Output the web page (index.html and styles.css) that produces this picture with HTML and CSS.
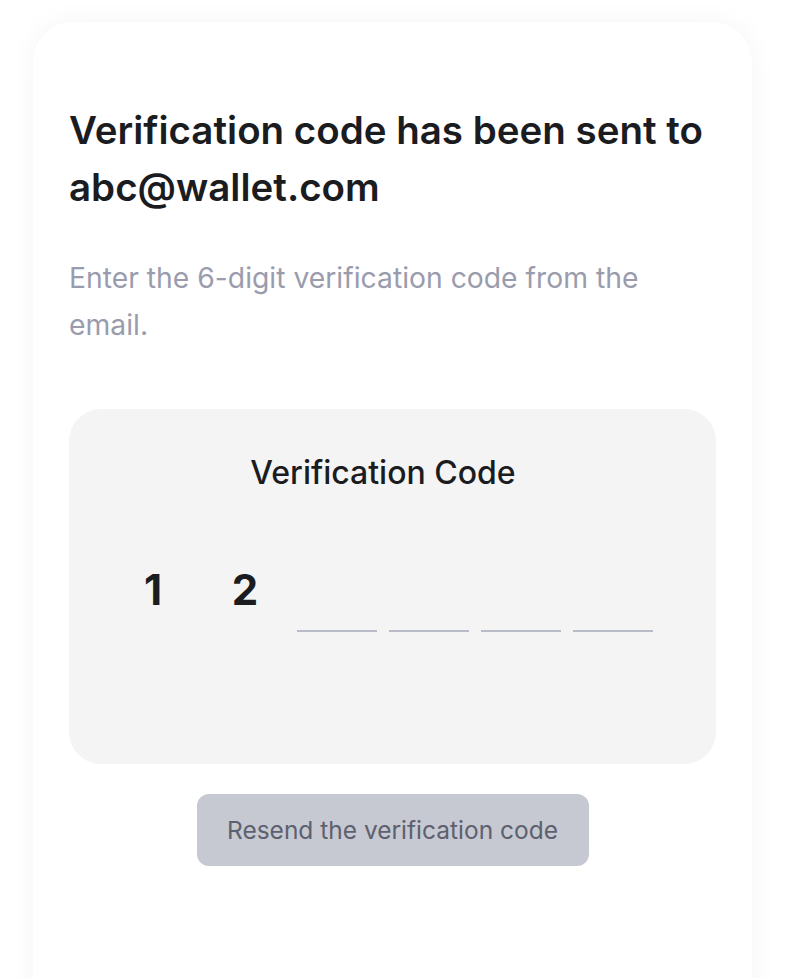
FILE: index.html
```html
<!DOCTYPE html>
<html lang="en">
<head>
<meta charset="utf-8">
<title>Verification</title>
<link rel="stylesheet" href="styles.css">
</head>
<body>
<main class="card">
  <h1 class="title">Verification code has been sent to abc@wallet.com</h1>
  <p class="subtitle">Enter the 6-digit verification code from the email.</p>
  <section class="code-box">
    <div class="code-label">Verification Code</div>
    <div class="slots">
      <div class="slot filled">1</div>
      <div class="slot filled">2</div>
      <div class="slot empty"></div>
      <div class="slot empty"></div>
      <div class="slot empty"></div>
      <div class="slot empty"></div>
    </div>
  </section>
  <div class="actions">
    <button class="resend" type="button">Resend the verification code</button>
  </div>
</main>
</body>
</html>
```

FILE: styles.css
```css
* { box-sizing: border-box; }
html, body {
  margin: 0;
  padding: 0;
  background: #ffffff;
  font-family: Inter, "Noto Sans", sans-serif;
  overflow: hidden;
}
.card {
  margin: 22px 0 0 33px;
  width: 719px;
  min-height: 1100px;
  background: #ffffff;
  border-radius: 40px;
  box-shadow: 0 0 28px rgba(0, 0, 0, 0.045);
  padding: 80px 36px 0 36px;
}
.title {
  margin: 0;
  font-size: 38.5px;
  line-height: 57px;
  font-weight: 600;
  color: #1b1c1f;
}
.subtitle {
  margin: 39px 0 0 0;
  max-width: 600px;
  font-size: 28.3px;
  line-height: 47px;
  font-weight: 400;
  color: #9a9cad;
}
.code-box {
  margin-top: 60px;
  background: #f4f4f4;
  border-radius: 32px;
  padding: 47px 63px 132px 44px;
}
.code-label {
  text-align: center;
  font-size: 32px;
  line-height: 34px;
  font-weight: 500;
  color: #1b1c1f;
}
.slots {
  margin-top: 76px;
  display: flex;
  gap: 12px;
}
.slot {
  width: 80px;
  height: 66px;
  text-align: center;
  font-size: 42px;
  line-height: 48px;
  font-weight: 700;
  color: #1b1c1f;
}
.slot.empty {
  border-bottom: 2px solid #b9bcc6;
}
.actions {
  display: flex;
  justify-content: center;
  margin-top: 30px;
}
.resend {
  width: 392px;
  height: 72px;
  border: none;
  border-radius: 12px;
  background: #c6c9d1;
  color: #5d606f;
  font-family: Inter, "Noto Sans", sans-serif;
  font-size: 24.5px;
  font-weight: 400;
  cursor: pointer;
}
```
